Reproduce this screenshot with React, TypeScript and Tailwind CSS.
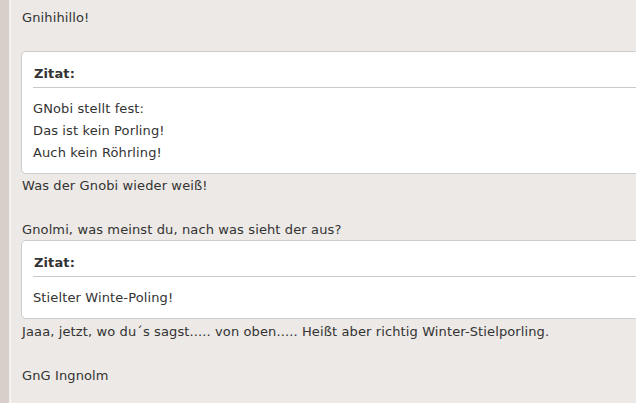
const body = "font-['DejaVu_Sans',Verdana,sans-serif] text-[13px] leading-[22px] tracking-[0.12px] text-[#333333]";

function Quote({ lines }: { lines: string[] }) {
  return (
    <div className="w-[640px] rounded-[5px] border border-[#cdcdcd] bg-white pl-[11px]">
      <div className="border-b border-[#c9c9c9] pt-[11px] pb-[2px] pl-[1px] font-['DejaVu_Sans',Verdana,sans-serif] text-[13px] font-bold leading-[22px] text-[#333333]">
        Zitat:
      </div>
      <div className={`${body} pt-[10px] pb-[9px]`}>
        {lines.map((line) => (
          <p key={line}>{line}</p>
        ))}
      </div>
    </div>
  );
}

export default function App() {
  return (
    <div className="flex h-[403px] w-[636px] overflow-hidden bg-[#ece9e6]">
      <div className="w-[9px] shrink-0 bg-[#d9cfca]" />
      <div className="w-[2px] shrink-0 bg-[#f4f2ef]" />
      <div className={`${body} flex-1 overflow-hidden pl-[11px] pt-[7px]`}>
        <p>Gnihihillo!</p>
        <div className="mt-[22px] -ml-[1px]">
          <Quote lines={["GNobi stellt fest:", "Das ist kein Porling!", "Auch kein Röhrling!"]} />
        </div>
        <p className="mt-[1px]">Was der Gnobi wieder weiß!</p>
        <p>&nbsp;</p>
        <p className="-mb-[1px]">Gnolmi, was meinst du, nach was sieht der aus?</p>
        <div className="-ml-[1px]">
          <Quote lines={["Stielter Winte-Poling!"]} />
        </div>
        <p className="mt-[2px]">Jaaa, jetzt, wo du´s sagst..... von oben..... Heißt aber richtig Winter-Stielporling.</p>
        <p>&nbsp;</p>
        <p>GnG Ingnolm</p>
      </div>
    </div>
  );
}
